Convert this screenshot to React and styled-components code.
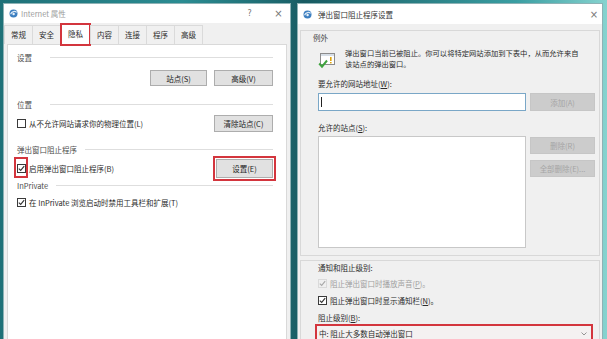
import styled, { createGlobalStyle, css } from "styled-components";

const GlobalStyle = createGlobalStyle`
  html, body {
    margin: 0;
    padding: 0;
    background: #1f6d73;
  }
  * {
    box-sizing: border-box;
  }
`;

const Desktop = styled.div`
  width: 607px;
  height: 339px;
  overflow: hidden;
  display: flex;
  align-items: flex-start;
  gap: 6px;
  padding: 3px 0 0 3px;
  background: linear-gradient(
    90deg,
    #1f7178 0%,
    #2b8c92 30%,
    #1b636a 48%,
    #175a61 50%,
    #3a9ea2 85%,
    #86d3cf 100%
  );
  font-family: "Noto Sans CJK SC", "Noto Sans", sans-serif;
  font-size: 7.5px;
  color: #2b2b2b;
`;

const Window = styled.div`
  flex: none;
  width: ${(p) => p.$width}px;
  height: 346px;
  display: flex;
  flex-direction: column;
  background: #f0f0f0;
  border: 1px solid #8db2b5;
`;

const TitleBar = styled.div`
  flex: none;
  height: ${(p) => p.$h}px;
  display: flex;
  align-items: center;
  padding-left: 5px;
  background: #fff;
`;

const TitleText = styled.span`
  flex: 1;
  margin-left: ${(p) => p.$gap}px;
  color: ${(p) => (p.$dim ? "#9b9b9b" : "#333")};
`;

const Control = styled.span`
  width: ${(p) => p.$w}px;
  margin-right: ${(p) => p.$mr || 0}px;
  text-align: center;
  font-family: "DejaVu Sans", sans-serif;
  font-size: ${(p) => p.$size}px;
  color: #777;
`;

/* ---------- Internet 属性 ---------- */

const TabStrip = styled.div`
  flex: none;
  height: 21px;
  display: flex;
  align-items: flex-end;
  padding-left: 1px;
  position: relative;
  z-index: 1;
`;

const Tab = styled.div`
  flex: none;
  width: ${(p) => (p.$active ? 31 : 29)}px;
  height: ${(p) => (p.$active ? 23 : 19)}px;
  margin-bottom: ${(p) => (p.$active ? -2 : 0)}px;
  display: flex;
  align-items: center;
  justify-content: center;
  padding-bottom: ${(p) => (p.$active ? 2 : 2)}px;
  background: ${(p) => (p.$active ? "#fff" : "#f0f0f0")};
  border: 1px solid #dadada;
  border-bottom: none;
  margin-left: -1px;
  ${(p) =>
    p.$active &&
    css`
      border: 2px solid #d3353d;
    `}
`;

const Panel = styled.div`
  flex: 1;
  margin: 0 3px;
  background: #fff;
  border: 1px solid #d9d9d9;
  padding: 6px 13px 0 9px;
  display: flex;
  flex-direction: column;
`;

const SectionHead = styled.div`
  display: flex;
  align-items: center;
  gap: 8px;
  height: 12px;
  margin-top: ${(p) => p.$mt || 0}px;
  color: #4d4d4d;

  span {
    min-width: 25px;
  }

  &::after {
    content: "";
    flex: 1;
    height: 1px;
    background: #dedede;
  }
`;

const Row = styled.div`
  display: flex;
  align-items: center;
  justify-content: ${(p) => p.$justify || "space-between"};
  gap: 7px;
  height: ${(p) => p.$h}px;
  margin-top: ${(p) => p.$mt || 0}px;
`;

const Button = styled.button`
  flex: none;
  width: ${(p) => p.$w}px;
  height: ${(p) => p.$h || 17}px;
  padding: 0;
  font: inherit;
  background: ${(p) => (p.disabled ? "#cccccc" : "#e1e1e1")};
  border: 1px solid ${(p) => (p.disabled ? "#c6c6c6" : "#adadad")};
  color: ${(p) => (p.disabled ? "#a5a5a5" : "#222")};
  ${(p) =>
    p.$marked &&
    css`
      outline: 2px solid #d3353d;
      outline-offset: 1px;
    `}
`;

const CheckRow = styled.div`
  display: flex;
  align-items: center;
  gap: 3px;
  height: 12px;
  margin-top: ${(p) => p.$mt || 0}px;
  color: ${(p) => (p.$disabled ? "#a0a0a0" : "inherit")};
`;

const Box = styled.span`
  position: relative;
  flex: none;
  width: 9px;
  height: 9px;
  display: inline-flex;
  align-items: center;
  justify-content: center;
  background: ${(p) => (p.$disabled ? "transparent" : "#fff")};
  border: 1px solid ${(p) => (p.$disabled ? "#dadada" : "#3a3a3a")};
  ${(p) =>
    p.$marked &&
    css`
      &::after {
        content: "";
        position: absolute;
        left: -4px;
        right: -3px;
        top: -8px;
        bottom: -6px;
        border: 2px solid #d3353d;
      }
    `}
`;

/* ---------- 弹出窗口阻止程序设置 ---------- */

const DialogBody = styled.div`
  flex: 1;
  display: flex;
  flex-direction: column;
  gap: 4px;
  padding: 6px 2px 0;
`;

const GroupBox = styled.div`
  flex: ${(p) => (p.$grow ? 1 : "none")};
  display: flex;
  flex-direction: column;
  border: 1px solid #d8d8d8;
  padding: ${(p) => p.$pad};
`;

const Label = styled.div`
  height: ${(p) => p.$h || 12}px;
  line-height: ${(p) => p.$h || 12}px;
  margin-top: ${(p) => p.$mt || 0}px;
  margin-left: ${(p) => p.$ml || 0}px;
  color: ${(p) => p.$color || "inherit"};
`;

const InfoRow = styled.div`
  display: flex;
  align-items: flex-start;
  gap: 9px;
  margin-top: 5px;

  svg {
    flex: none;
    margin-top: 3px;
  }

  p {
    margin: 0;
    line-height: 11px;
    font-size: 7.3px;
  }
`;

const FieldRow = styled.div`
  display: flex;
  align-items: flex-start;
  gap: 4px;
  margin-top: ${(p) => p.$mt || 0}px;
`;

const Input = styled.div`
  flex: none;
  width: 208px;
  height: ${(p) => p.$h}px;
  background: #fff;
  border: 1px solid ${(p) => (p.$focus ? "#7aa7c7" : "#c8c8c8")};
  padding: 3px 2px;

  &::before {
    content: "";
    display: ${(p) => (p.$focus ? "block" : "none")};
    width: 1px;
    height: 10px;
    background: #222;
  }
`;

const ButtonColumn = styled.div`
  display: flex;
  flex-direction: column;
  gap: 6px;
  padding-top: 1px;
`;

const Select = styled.div`
  width: 278px;
  height: 19px;
  margin-left: -3px;
  display: flex;
  align-items: center;
  justify-content: space-between;
  padding: 0 4px 0 2px;
  background: #f4f1f1;
  border: 2px solid #d3353d;
`;

const CheckMark = ({ color = "#333" }) => (
  <svg width="7" height="7" viewBox="0 0 7 7">
    <path d="M0.8 3.6 L2.7 5.4 L6.2 1.2" fill="none" stroke={color} strokeWidth="1.1" />
  </svg>
);

const Check = ({ checked, disabled, marked, children, mt }) => (
  <CheckRow $mt={mt} $disabled={disabled}>
    <Box $disabled={disabled} $marked={marked}>
      {checked && <CheckMark color={disabled ? "#a8a8a8" : "#333"} />}
    </Box>
    <span>{children}</span>
  </CheckRow>
);

const GlobeIcon = () => (
  <svg width="9" height="9" viewBox="0 0 9 9">
    <circle cx="4.5" cy="4.5" r="4" fill="#3d7fc0" />
    <path d="M1.6 5.2 C2.6 2.2 6.2 1.8 7.6 3.4" fill="none" stroke="#dbe9f6" strokeWidth="1.2" />
    <circle cx="4.6" cy="5" r="1.2" fill="#e9f2fa" />
  </svg>
);

const BlockedIcon = () => (
  <svg width="18" height="18" viewBox="0 0 18 18">
    <rect x="2.5" y="2.5" width="14" height="11" fill="#fff" stroke="#8c8c8c" />
    <rect x="3" y="3" width="13" height="2" fill="#d6dee6" />
    <rect x="12" y="6" width="1.6" height="4" fill="#e0a40a" />
    <rect x="12" y="11" width="1.6" height="1.4" fill="#e0a40a" />
    <path d="M1.2 12.5 L4 15.6 L9 9.5" fill="none" stroke="#3ea33e" strokeWidth="2" />
  </svg>
);

const Chevron = () => (
  <svg width="6" height="4" viewBox="0 0 6 4">
    <path d="M0.5 0.5 L3 3 L5.5 0.5" fill="none" stroke="#8a8a8a" strokeWidth="0.9" />
  </svg>
);

const tabs = ["常规", "安全", "隐私", "内容", "连接", "程序", "高级"];

const InternetOptions = () => (
  <Window $width={288}>
    <TitleBar $h={19}>
      <GlobeIcon />
      <TitleText $gap={3} $dim>
        Internet 属性
      </TitleText>
      <Control $w={23} $mr={6} $size={8}>
        ?
      </Control>
      <Control $w={23} $size={10}>
        ×
      </Control>
    </TitleBar>
    <TabStrip>
      {tabs.map((t) => (
        <Tab key={t} $active={t === "隐私"}>
          {t}
        </Tab>
      ))}
    </TabStrip>
    <Panel>
      <SectionHead>
        <span>设置</span>
      </SectionHead>
      <Row $h={16} $mt={7} $justify="flex-end">
        <Button $w={57} $h={16}>
          站点(S)
        </Button>
        <Button $w={59} $h={16}>
          高级(V)
        </Button>
      </Row>

      <SectionHead $mt={12}>
        <span>位置</span>
      </SectionHead>
      <Row $h={17} $mt={5}>
        <Check>从不允许网站请求你的物理位置(L)</Check>
        <Button $w={59}>清除站点(C)</Button>
      </Row>

      <SectionHead $mt={11}>
        <span>弹出窗口阻止程序</span>
      </SectionHead>
      <Row $h={19} $mt={4}>
        <Check checked marked>
          启用弹出窗口阻止程序(B)
        </Check>
        <Button $w={57} $h={19} $marked>
          设置(E)
        </Button>
      </Row>

      <SectionHead $mt={1}>
        <span>InPrivate</span>
      </SectionHead>
      <Check checked mt={5}>
        在 InPrivate 浏览启动时禁用工具栏和扩展(T)
      </Check>
    </Panel>
  </Window>
);

const PopupSettings = () => (
  <Window $width={306}>
    <TitleBar $h={20}>
      <GlobeIcon />
      <TitleText $gap={6}>弹出窗口阻止程序设置</TitleText>
      <Control $w={14} $mr={1} $size={10}>
        ×
      </Control>
    </TitleBar>
    <DialogBody>
      <GroupBox $pad="0 4px 7px 17px">
        <Label $h={11} $mt={1} $ml={-5} $color="#444">
          例外
        </Label>
        <InfoRow>
          <BlockedIcon />
          <p>
            弹出窗口当前已被阻止。你可以将特定网站添加到下表中，从而允许来自
            <br />
            该站点的弹出窗口。
          </p>
        </InfoRow>
        <Label $mt={8}>
          要允许的网站地址(<u>W</u>):
        </Label>
        <FieldRow $mt={3}>
          <Input $h={18} $focus />
          <Button $w={65} $h={18} disabled>
            添加(A)
          </Button>
        </FieldRow>
        <Label $mt={11}>
          允许的站点(<u>S</u>):
        </Label>
        <FieldRow $mt={2}>
          <Input $h={112} />
          <ButtonColumn>
            <Button $w={65} disabled>
              删除(R)
            </Button>
            <Button $w={65} disabled>
              全部删除(E)...
            </Button>
          </ButtonColumn>
        </FieldRow>
      </GroupBox>

      <GroupBox $grow $pad="1px 4px 0 17px">
        <Label>通知和阻止级别:</Label>
        <Check checked disabled mt={3}>
          阻止弹出窗口时播放声音(<u>P</u>)。
        </Check>
        <Check checked mt={5}>
          阻止弹出窗口时显示通知栏(<u>N</u>)。
        </Check>
        <Label $mt={6}>
          阻止级别(<u>B</u>):
        </Label>
        <Select>
          <span>中: 阻止大多数自动弹出窗口</span>
          <Chevron />
        </Select>
      </GroupBox>
    </DialogBody>
  </Window>
);

export default function App() {
  return (
    <>
      <GlobalStyle />
      <Desktop>
        <InternetOptions />
        <PopupSettings />
      </Desktop>
    </>
  );
}
